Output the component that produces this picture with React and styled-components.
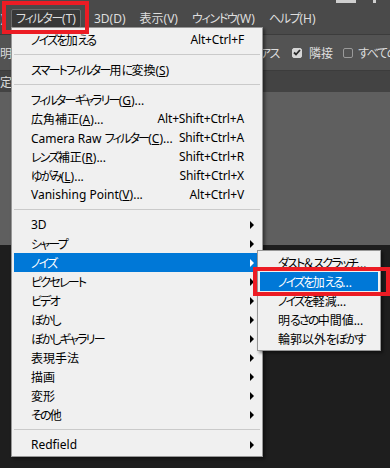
import styled, { createGlobalStyle } from "styled-components";

const Global = createGlobalStyle`
  html, body { margin: 0; padding: 0; }
  body {
    width: 390px;
    height: 468px;
    overflow: hidden;
    background: #1e1e1e;
    font-family: "Noto Sans", "Noto Sans CJK JP", sans-serif;
    font-feature-settings: "palt";
    font-size: 12px;
  }
`;

const Screen = styled.div`
  position: relative;
  width: 390px;
  height: 468px;
  display: flex;
  flex-direction: column;
  overflow: hidden;
`;

const MenuBar = styled.div`
  position: relative;
  height: 34px;
  flex: none;
  display: flex;
  align-items: center;
  background: #4a4a4a;
  color: #dedede;
  white-space: nowrap;
  padding-top: 2px;
  box-sizing: border-box;
`;

const Clip = styled.span`
  width: ${(p) => p.$w}px;
  overflow: hidden;
  flex: none;
  direction: rtl;
  margin-right: ${(p) => p.$mr || 0}px;
`;

const BarItem = styled.div`
  height: 17px;
  line-height: 17px;
  padding: 0 ${(p) => (p.$active ? 4 : 6)}px;
  margin-right: ${(p) => (p.$active ? 6 : 0)}px;
  border: 1px solid ${(p) => (p.$active ? "#6a6a6a" : "transparent")};
  border-radius: 2px;
  background: ${(p) => (p.$active ? "#383838" : "transparent")};
`;

const TopBit = styled.div`
  position: absolute;
  top: 0;
  left: ${(p) => p.$x}px;
  width: ${(p) => p.$w}px;
  height: 3px;
  background: #cfcfcf;
`;

const OptionsBar = styled.div`
  height: 35px;
  flex: none;
  display: flex;
  align-items: center;
  background: #535353;
  border-top: 1px solid #3c3c3c;
  border-bottom: 1px solid #3c3c3c;
  color: #dcdcdc;
  white-space: nowrap;
  overflow: hidden;
`;

const OptionText = styled.span`
  margin-left: ${(p) => p.$ml || 0}px;
  flex: none;
`;

const EndAligned = styled.span`
  flex: none;
  width: ${(p) => p.$w}px;
  margin-left: ${(p) => p.$ml}px;
  display: flex;
  justify-content: flex-end;
`;

const Check = styled.span`
  flex: none;
  width: 10px;
  height: 10px;
  margin: 0 ${(p) => p.$mr || 0}px 0 ${(p) => p.$ml || 0}px;
  border-radius: 2px;
  box-sizing: border-box;
  display: flex;
  align-items: center;
  justify-content: center;
  background: ${(p) => (p.$on ? "#d6d6d6" : "transparent")};
  border: 1px solid ${(p) => (p.$on ? "#d6d6d6" : "#9a9a9a")};
`;

const TabBar = styled.div`
  height: 21px;
  flex: none;
  display: flex;
  align-items: center;
  background: #434343;
  color: #dcdcdc;
  overflow: hidden;
`;

const Canvas = styled.div`
  height: 153px;
  flex: none;
  background: #5f5f5f;
`;

const Dark = styled.div`
  flex: 1;
  background: #1e1e1e;
`;

const Popup = styled.div`
  position: absolute;
  left: ${(p) => p.$x}px;
  top: ${(p) => p.$y}px;
  width: ${(p) => p.$w}px;
  box-sizing: border-box;
  padding: 2px 0;
  background: #f0f0f0;
  border: 1px solid #979797;
  box-shadow: 2px 2px 3px rgba(0, 0, 0, 0.45);
  color: #000;
  white-space: nowrap;
`;

const Item = styled.div`
  height: 19px;
  margin: 0 2px;
  display: flex;
  align-items: center;
  padding-left: ${(p) => p.$pl}px;
  background: ${(p) => (p.$hot ? "#0078d7" : "transparent")};
  color: ${(p) => (p.$hot ? "#fff" : "#000")};
`;

const Label = styled.span`
  flex: 1;
`;

const Shortcut = styled.span`
  flex: none;
  letter-spacing: -0.15px;
`;

const ArrowSlot = styled.span`
  flex: none;
  width: 16px;
  display: flex;
  align-items: center;
  padding-left: 6px;
  box-sizing: border-box;
`;

const Arrow = styled.span`
  width: 0;
  height: 0;
  border-left: 4px solid ${(p) => (p.$hot ? "#fff" : "#000")};
  border-top: 4px solid transparent;
  border-bottom: 4px solid transparent;
`;

const Separator = styled.div`
  height: 11px;
  margin: 0 2px;
  display: flex;
  align-items: center;
  &::after {
    content: "";
    flex: 1;
    height: 1px;
    background: #cacaca;
  }
`;

const Kana = styled.span`
  letter-spacing: ${(p) => p.$ls ?? -1.8}px;
`;

const RedBox = styled.div`
  position: absolute;
  left: ${(p) => p.$x}px;
  top: ${(p) => p.$y}px;
  width: ${(p) => p.$w}px;
  height: ${(p) => p.$h}px;
  box-sizing: border-box;
  border: 4px solid #ec1c24;
  z-index: 10;
`;

// kana are set tighter, the way the Windows UI font draws them
const jp = (s, ls) =>
  s
    .split(/([\u3040-\u30ff]+)/)
    .map((part, i) =>
      /^[\u3040-\u30ff]/.test(part) ? (
        <Kana key={i} $ls={ls}>
          {part}
        </Kana>
      ) : (
        part
      )
    );

const menu = [
  { label: "ノイズを加える", key: "Alt+Ctrl+F" },
  "sep",
  { label: "スマートフィルター用に変換(", u: "S", rest: ")" },
  "sep",
  { label: "フィルターギャラリー(", u: "G", rest: ")..." },
  { label: "広角補正(", u: "A", rest: ")...", key: "Alt+Shift+Ctrl+A" },
  { label: "Camera Raw フィルター(", u: "C", rest: ")...", key: "Shift+Ctrl+A" },
  { label: "レンズ補正(", u: "R", rest: ")...", key: "Shift+Ctrl+R" },
  { label: "ゆがみ(", u: "L", rest: ")...", key: "Shift+Ctrl+X" },
  { label: "Vanishing Point(", u: "V", rest: ")...", key: "Alt+Ctrl+V" },
  "sep",
  { label: "3D", sub: true },
  { label: "シャープ", sub: true },
  { label: "ノイズ", sub: true, hot: true },
  { label: "ピクセレート", sub: true },
  { label: "ビデオ", sub: true },
  { label: "ぼかし", sub: true },
  { label: "ぼかしギャラリー", sub: true },
  { label: "表現手法", sub: true },
  { label: "描画", sub: true },
  { label: "変形", sub: true },
  { label: "その他", sub: true },
  "sep",
  { label: "Redfield", sub: true },
];

const noiseMenu = [
  { label: "ダスト＆スクラッチ..." },
  { label: "ノイズを加える...", hot: true },
  { label: "ノイズを軽減..." },
  { label: "明るさの中間値..." },
  { label: "輪郭以外をぼかす" },
];

const barItems = ["フィルター(T)", "3D(D)", "表示(V)", "ウィンドウ(W)", "ヘルプ(H)"];

function CheckMark() {
  return (
    <svg width="8" height="7" viewBox="0 0 8 7">
      <path d="M1 3.5 L3 5.5 L7 1" stroke="#2a2a2a" strokeWidth="1.8" fill="none" />
    </svg>
  );
}

export default function App() {
  return (
    <Screen>
      <Global />
      <MenuBar>
        <Clip $w={4} $mr={7}>(S)</Clip>
        {barItems.map((t, i) => (
          <BarItem key={t} $active={i === 0}>
            {jp(t, -1.3)}
          </BarItem>
        ))}
        <TopBit $x={336} $w={20} />
        <TopBit $x={373} $w={3} />
      </MenuBar>
      <OptionsBar>
        <OptionText $ml={-12}>透明</OptionText>
        <EndAligned $w={100} $ml={167}>
          {jp("アンチエイリアス", -1.4)}
        </EndAligned>
        <Check $on $ml={13} $mr={7}>
          <CheckMark />
        </Check>
        <OptionText>隣接</OptionText>
        <Check $ml={10} $mr={5} />
        <OptionText>{jp("すべてのレイヤー", -1.4)}</OptionText>
      </OptionsBar>
      <TabBar>
        <OptionText $ml={-12}>設定</OptionText>
      </TabBar>
      <Canvas />
      <Dark />

      <Popup $x={11} $y={27} $w={252}>
        {menu.map((m, i) =>
          m === "sep" ? (
            <Separator key={i} />
          ) : (
            <Item key={i} $pl={17} $hot={m.hot}>
              <Label>
                {jp(m.label)}
                {m.u && <u>{m.u}</u>}
                {m.rest}
              </Label>
              {m.key && <Shortcut>{m.key}</Shortcut>}
              <ArrowSlot>{m.sub && <Arrow $hot={m.hot} />}</ArrowSlot>
            </Item>
          )
        )}
        <Popup $x={245} $y={222} $w={124}>
          {noiseMenu.map((m, i) => (
            <Item key={i} $pl={18} $hot={m.hot}>
              <Label>{jp(m.label)}</Label>
            </Item>
          ))}
        </Popup>
      </Popup>

      <RedBox $x={2} $y={1} $w={87} $h={33} />
      <RedBox $x={253} $y={267} $w={137} $h={29} />
    </Screen>
  );
}
